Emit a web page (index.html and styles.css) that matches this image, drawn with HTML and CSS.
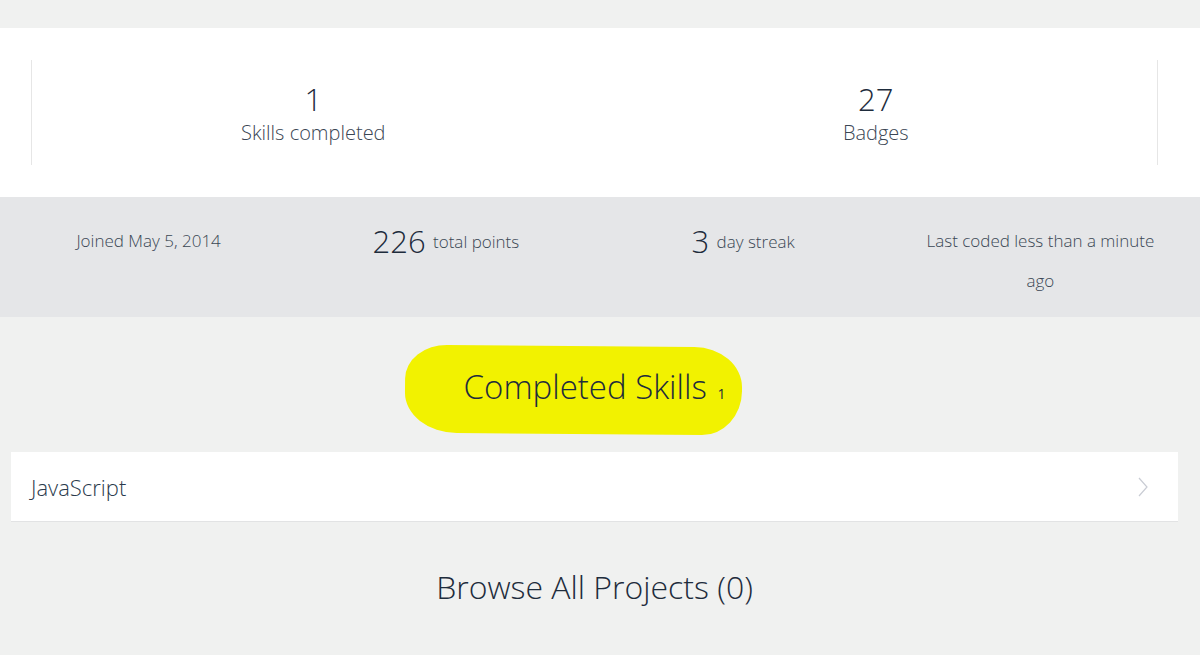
FILE: index.html
```html
<!DOCTYPE html>
<html lang="en">
<head>
    <meta charset="UTF-8">
    <meta name="viewport" content="width=device-width, initial-scale=1.0">
    <title>Profile</title>
    <link rel="stylesheet" href="styles.css">
</head>
<body>
    <div class="top-gap"></div>

    <section class="summary">
        <div class="summary-box">
            <div class="summary-item">
                <div class="summary-num">1</div>
                <div class="summary-label">Skills completed</div>
            </div>
            <div class="summary-item">
                <div class="summary-num">27</div>
                <div class="summary-label">Badges</div>
            </div>
        </div>
    </section>

    <section class="meta">
        <div class="meta-item">Joined May 5, 2014</div>
        <div class="meta-item"><span class="meta-num">226</span> <span class="meta-label">total points</span></div>
        <div class="meta-item"><span class="meta-num">3</span> <span class="meta-label">day streak</span></div>
        <div class="meta-item">Last coded less than a minute ago</div>
    </section>

    <section class="skills">
        <h2 class="section-title highlight">Completed Skills <span class="count">1</span></h2>
    </section>

    <a class="skill-row" href="#">
        <span>JavaScript</span>
        <svg class="chevron" width="10" height="20" viewBox="0 0 10 20">
            <polyline points="1,1 9,10 1,19" fill="none" stroke="#c9ccd4" stroke-width="1.2"/>
        </svg>
    </a>

    <section class="projects">
        <h2 class="section-title">Browse All Projects (0)</h2>
    </section>
</body>
</html>
```

FILE: styles.css
```css
body {
    margin: 0;
    font-family: 'Open Sans', sans-serif;
    font-weight: 300;
    background: #f0f1f0;
    color: #1e2c3c;
}
.top-gap {
    height: 28px;
}
.summary {
    background: #fff;
    padding: 32px 42px 32px 31px;
}
.summary-box {
    display: grid;
    grid-template-columns: 1fr 1fr;
    height: 105px;
    border-left: 1px solid #e6e6e6;
    border-right: 1px solid #e6e6e6;
    text-align: center;
}
.summary-item {
    padding-top: 21px;
}
.summary-num {
    font-size: 31px;
    line-height: 36px;
}
.summary-label {
    font-size: 20px;
    line-height: 32px;
    color: #3a4654;
}
.meta {
    display: grid;
    grid-template-columns: repeat(4, 1fr);
    background: #e5e6e8;
    height: 120px;
    box-sizing: border-box;
    padding: 24px 11px 0 0;
    text-align: center;
    font-size: 17px;
    line-height: 40px;
    color: #3a4654;
}
.meta-item {
    padding: 0 32px;
}
.meta-num {
    font-size: 31px;
    color: #1e2c3c;
    vertical-align: -2px;
    margin-right: 3px;
}
.meta-label {
    vertical-align: 3px;
}
.skills {
    height: 135px;
    box-sizing: border-box;
    padding: 12px 11px 0 0;
    display: flex;
    align-items: center;
    justify-content: center;
}
.section-title {
    margin: 0;
    font-size: 32px;
    line-height: 44px;
    font-weight: 300;
    color: #1e2c3c;
}
.highlight {
    position: relative;
    z-index: 0;
    font-size: 33px;
}
/* marker stroke behind the heading */
.highlight::before {
    content: "";
    position: absolute;
    z-index: -1;
    left: -59px;
    right: -16px;
    top: -19px;
    bottom: -18px;
    background: #f2f200;
    border-radius: 42px 48px 40px 52px / 34px 40px 44px 40px;
    transform: rotate(0.5deg);
}
.count {
    font-size: 14px;
    font-weight: 400;
    margin-left: 2px;
    color: #1e2c3c;
}
.skill-row {
    display: flex;
    align-items: center;
    justify-content: space-between;
    margin: 0 22px 0 11px;
    height: 69px;
    padding: 0 30px 0 20px;
    background: #fff;
    border-bottom: 1px solid #e2e3e4;
    font-size: 22px;
    color: #2a3a4c;
    text-decoration: none;
}
.chevron {
    display: block;
}
.projects {
    height: 133px;
    box-sizing: border-box;
    padding: 43px 11px 0 0;
    display: flex;
    justify-content: center;
}
```
